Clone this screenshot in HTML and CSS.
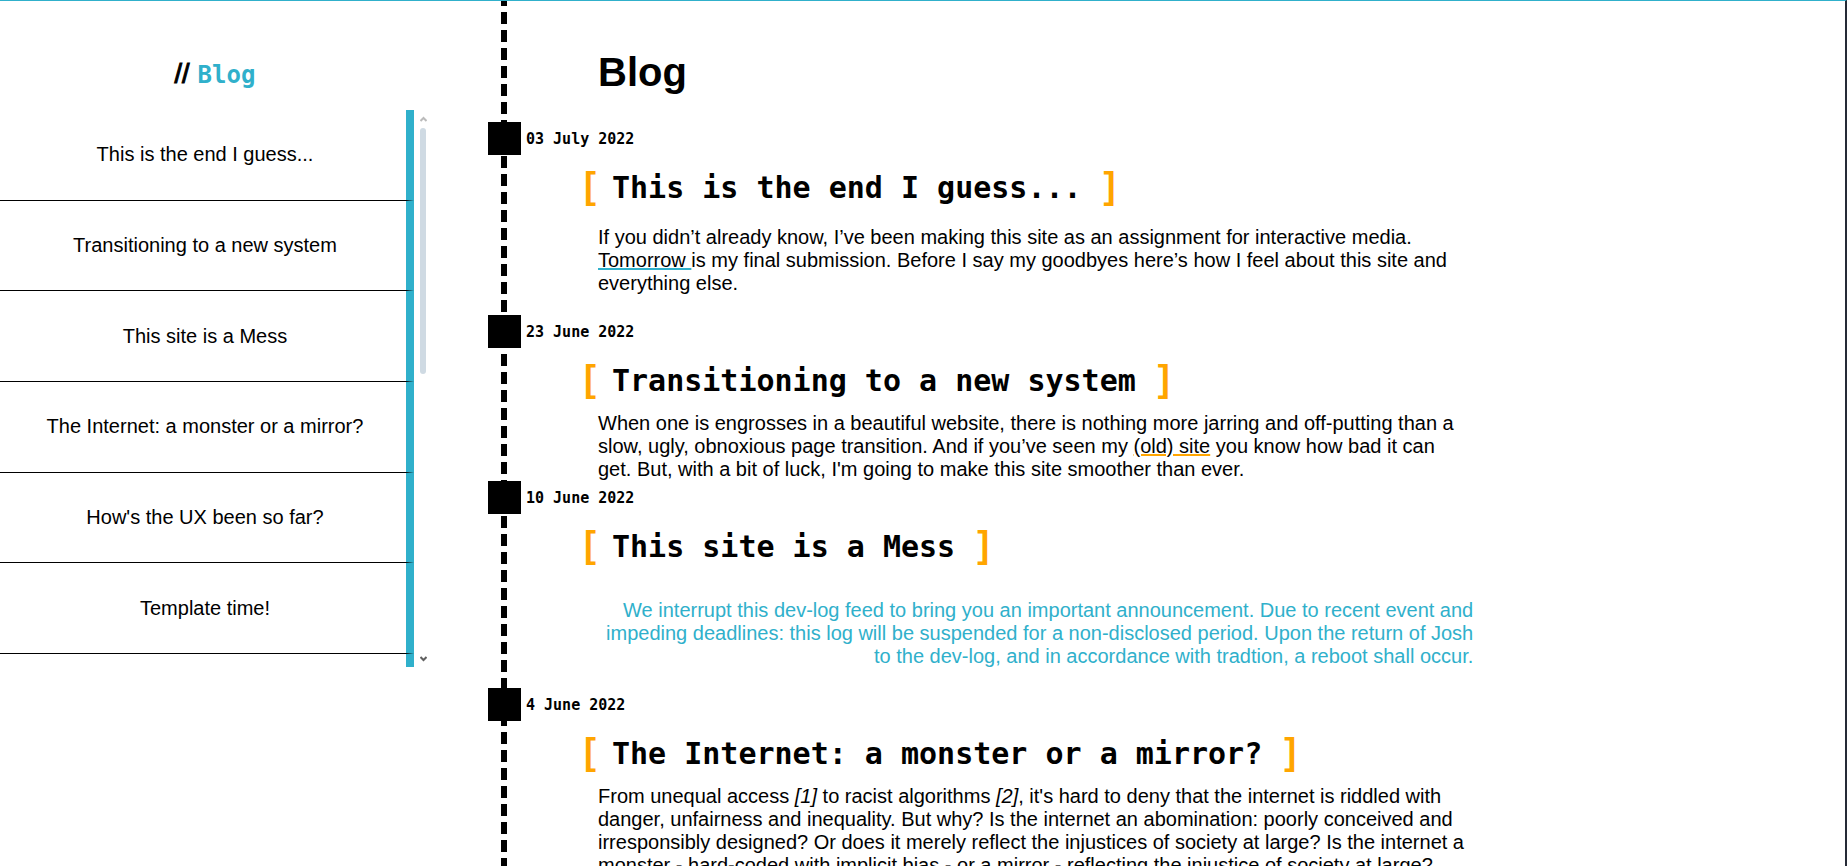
FILE: index.html
```html
<!DOCTYPE html>
<html lang="en">
<head>
<meta charset="utf-8">
<title>Blog</title>
<link rel="stylesheet" href="styles.css">
</head>
<body>
<div class="page">
  <aside class="sidebar">
    <p class="crumb"><span class="crumb-slashes">//</span><a class="crumb-link" href="#blog">Blog</a></p>
    <div class="index">
      <ul class="index-list">
        <li><a href="#end">This is the end I guess...</a></li>
        <li><a href="#system">Transitioning to a new system</a></li>
        <li><a href="#mess">This site is a Mess</a></li>
        <li><a href="#internet">The Internet: a monster or a mirror?</a></li>
        <li><a href="#ux">How's the UX been so far?</a></li>
        <li><a href="#template">Template time!</a></li>
      </ul>
      <div class="scrollbar" aria-hidden="true">
        <svg class="arrow arrow-up" width="7" height="6" viewBox="0 0 7 6"><path d="M0.5 5 L3.5 2 L6.5 5"/></svg>
        <div class="thumb"></div>
        <svg class="arrow arrow-down" width="7" height="6" viewBox="0 0 7 6"><path d="M0.5 1 L3.5 4 L6.5 1"/></svg>
      </div>
    </div>
  </aside>
  <main class="timeline" id="blog">
    <h1>Blog</h1>
    <article class="entry entry-spaced" id="end">
      <time class="date" datetime="2022-07-03">03 July 2022</time>
      <h2><span class="bracket">[</span><span class="title">This is the end I guess...</span><span class="bracket">]</span></h2>
      <p>If you didn’t already know, I’ve been making this site as an assignment for interactive media. <a class="link-blue" href="#end">Tomorrow </a>is my final submission. Before I say my goodbyes here’s how I feel about this site and everything else.</p>
    </article>
    <article class="entry" id="system">
      <time class="date" datetime="2022-06-23">23 June 2022</time>
      <h2><span class="bracket">[</span><span class="title">Transitioning to a new system</span><span class="bracket">]</span></h2>
      <p>When one is engrosses in a beautiful website, there is nothing more jarring and off-putting than a slow, ugly, obnoxious page transition. And if you’ve seen my <a class="link-orange" href="#system">(old) site</a> you know how bad it can get. But, with a bit of luck, I'm going to make this site smoother than ever.</p>
    </article>
    <article class="entry entry-notice" id="mess">
      <time class="date" datetime="2022-06-10">10 June 2022</time>
      <h2><span class="bracket">[</span><span class="title">This site is a Mess</span><span class="bracket">]</span></h2>
      <p>We interrupt this dev-log feed to bring you an important announcement. Due to recent event and impeding deadlines: this log will be suspended for a non-disclosed period. Upon the return of Josh to the dev-log, and in accordance with tradtion, a reboot shall occur.</p>
    </article>
    <article class="entry" id="internet">
      <time class="date" datetime="2022-06-04">4 June 2022</time>
      <h2><span class="bracket">[</span><span class="title">The Internet: a monster or a mirror?</span><span class="bracket">]</span></h2>
      <p>From unequal access <cite>[1]</cite> to racist algorithms <cite>[2]</cite>, it's hard to deny that the internet is riddled with danger, unfairness and inequality. But why? Is the internet an abomination: poorly conceived and irresponsibly designed? Or does it merely reflect the injustices of society at large? Is the internet a monster - hard-coded with implicit bias - or a mirror - reflecting the injustice of society at large?</p>
    </article>
  </main>
</div>
</body>
</html>
```
FILE: styles.css
```css
:root {
  --blue: #30b0cb;
  --orange: orange;
  --mono: "DejaVu Sans Mono", monospace;
  --sans: "Liberation Sans", Arial, sans-serif;
}

* {
  box-sizing: border-box;
}

body {
  margin: 0;
  height: 100vh;
  overflow: hidden;
  background: #fff;
  color: #000;
  font: 20px/23px var(--sans);
}

a {
  color: inherit;
  text-decoration: none;
}

.page {
  display: flex;
  min-height: 100vh;
  border-top: 1px solid var(--blue);
  border-right: 2px solid #252a36;
}

.sidebar {
  flex: 0 0 430px;
  padding-top: 55px;
}

.crumb {
  display: flex;
  align-items: baseline;
  justify-content: center;
  gap: 8px;
  margin: 0;
  line-height: 36px;
}

.crumb-slashes {
  font-size: 27px;
  -webkit-text-stroke: 1px #000;
}

.crumb-link {
  color: var(--blue);
  font: bold 24px/36px var(--mono);
}

.index {
  display: flex;
  height: 557px;
  margin-top: 17px;
}

.index-list {
  display: flex;
  flex: 1;
  flex-direction: column;
  margin: 0;
  padding: 0;
  list-style: none;
}

.index-list li {
  display: flex;
  flex: 1;
  border-right: 8px solid var(--blue);
  border-bottom: 1px solid #000;
}

.index-list::after {
  content: "";
  height: 13px;
  border-right: 8px solid var(--blue);
}

.index-list a {
  display: flex;
  flex: 1;
  align-items: center;
  justify-content: center;
  padding-left: 4px;
}

.scrollbar {
  display: flex;
  flex: 0 0 16px;
  flex-direction: column;
  padding: 6px 0 5px 6px;
}

.arrow {
  fill: none;
  stroke-width: 2;
}

.arrow-up {
  stroke: #bbb;
}

.arrow-down {
  margin-top: auto;
  stroke: #606060;
}

.thumb {
  width: 6px;
  height: 246px;
  margin-top: 6px;
  border-radius: 3px;
  background: #cfdae3;
}

.timeline {
  flex: 1;
  height: calc(100vh - 1px);
  overflow: hidden;
  padding: 48px 0 0 58px;
  background: repeating-linear-gradient(#000 0 5px, transparent 5px 11px, #000 11px 18px) 71px 0 / 6px 100% no-repeat;
}

h1 {
  margin: 0 0 27px 110px;
  font-size: 40px;
  line-height: 46px;
}

.date {
  display: flex;
  align-items: center;
  gap: 5px;
  height: 33px;
  font: bold 15px/20px var(--mono);
}

.date::before {
  content: "";
  width: 33px;
  height: 33px;
  background: #000;
}

h2 {
  display: flex;
  align-items: flex-start;
  gap: 16px;
  margin: 11px 0 9px 96px;
  font: bold 30px/44px var(--mono);
}

.title {
  padding-right: 6px;
}

.bracket {
  color: var(--orange);
  font-family: var(--sans);
  font-size: 36px;
  line-height: 40px;
}

.entry p {
  width: 64.5%;
  min-width: 480px;
  margin: 0 0 0 110px;
}

.entry-spaced p {
  padding: 7px 0 20px;
}

.entry-notice p {
  padding: 21px 0 20px;
  color: var(--blue);
  text-align: right;
}

.link-blue,
.link-orange {
  text-decoration: underline 2px var(--blue);
  text-underline-offset: 1px;
}

.link-orange {
  text-decoration-color: var(--orange);
}
```
